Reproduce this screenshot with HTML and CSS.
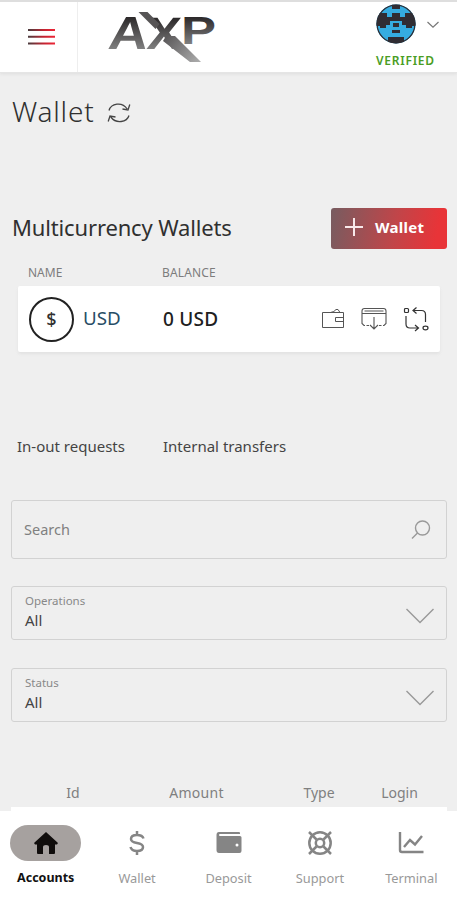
FILE: index.html
```html
<!DOCTYPE html>
<html lang="en">
<head>
<meta charset="utf-8">
<title>Wallet</title>
<link rel="stylesheet" href="styles.css">
</head>
<body>
<header class="header">
  <div class="menu">
    <svg width="28" height="20" viewBox="0 0 28 20"><defs><linearGradient id="bar" gradientUnits="userSpaceOnUse" x1="0" x2="27" y1="0" y2="0"><stop stop-color="#493b3d"/><stop offset=".6" stop-color="#c52432"/><stop offset="1" stop-color="#ee2536"/></linearGradient></defs><path d="M0 3H27M0 9.8H27M0 16.6H27" stroke="url(#bar)" stroke-width="2"/></svg>
  </div>
  <svg class="logo" width="112" height="56" viewBox="106 8 112 56" role="img" aria-label="AXP">
    <defs>
      <linearGradient id="steel" gradientUnits="userSpaceOnUse" x1="0" x2="0" y1="-17" y2="1"><stop stop-color="#2c292a"/><stop offset="1" stop-color="#858585"/></linearGradient>
      <linearGradient id="tail" gradientUnits="userSpaceOnUse" x1="165" x2="198" y1="34" y2="62"><stop stop-color="#565455"/><stop offset="1" stop-color="#aaa"/></linearGradient>
    </defs>
    <g class="logo-text" fill="url(#steel)">
      <text transform="translate(107 49) skewX(-7) scale(2.2 1.86)">A</text>
      <text transform="translate(146 49) skewX(-4) scale(2.05 1.82)">X</text>
      <text transform="translate(181 44) scale(2.1 1.57)">P</text>
    </g>
    <path d="M138.500 12h9l12 12-4 5zM166 36h9l26 26h-11l-27-21z" fill="url(#tail)"/>
  </svg>
  <div class="account">
    <div class="account-row">
      <svg width="40" height="40" viewBox="0 0 40 40"><defs><clipPath id="round"><circle cx="20" cy="20" r="19.6"/></clipPath></defs><g clip-path="url(#round)"><path fill="#35ace0" d="M0 0h40v40H0z"/><path fill="#302d33" d="M16 0h8v5h-8zM0 9h11v4h5v-4h8v4h5v-4h11v13h-4v2h-6v-3h-4v-4H14v4h-4v3H4v-2H0zM17 19h6v4h-6zM16 26h8v3h-8zM12 33h16v7H12z"/><circle cx="20" cy="20" r="19" fill="none" stroke="#302d33" stroke-width="1.500"/></g></svg>
      <svg width="14" height="10" viewBox="0 0 14 10"><path d="M1.5 3L7 8.2 12.5 3" fill="none" stroke="#777" stroke-width="1.2"/></svg>
    </div>
    <div class="verified">VERIFIED</div>
  </div>
</header>
<main class="page">
  <div class="title"><h1>Wallet</h1>
    <svg width="24" height="24" viewBox="0 0 24 24" fill="none" stroke="#444" stroke-width="1.3"><path d="M2 10.500C4 3.500 15 1.200 20.200 9M22.800 4.500L21 10l-5.500-1M22 15.500C20 22.500 9 24 3.800 17M1.200 21.500L3 16l5.500 1"/></svg>
  </div>
  <div class="section-head"><h2>Multicurrency Wallets</h2>
    <button class="add"><svg width="18" height="18" viewBox="0 0 18 18"><path d="M9 0V18M0 9H18" stroke="#f8e9ea" stroke-width="2"/></svg><span>Wallet</span></button>
  </div>
  <div class="columns"><span class="name">NAME</span><span class="balance-label">BALANCE</span></div>
  <div class="card">
    <span class="coin">$</span><span class="currency">USD</span><span class="balance">0 USD</span>
    <div class="actions">
      <svg width="24" height="22" viewBox="0 0 24 22" fill="none" stroke="#555"><path d="M1.500 4.500h21v15h-21zM9.500 4.500q4-.5 5.500-3h2l2 3M22.500 9.500h-8v4h8"/></svg>
      <svg width="26" height="24" viewBox="0 0 26 24" fill="none" stroke="#555" stroke-width="1.1"><path d="M4 18.500H3L1 16.500V4q0-2.500 2.500-2.500h19Q25 1.500 25 4v12.500l-2 2h-1M1 6.500h24M3.500 4h19M13 10v12M9 18l4 4 4-4M5.500 18.500H8M18 18.500h2.500"/></svg>
      <svg width="26" height="26" viewBox="0 0 26 26" fill="none" stroke="#333" stroke-width="1.2"><rect x="1.500" y="2.500" width="4" height="4" rx="1"/><ellipse cx="22.500" cy="22" rx="2.500" ry="1.800"/><path d="M3 10v8q0 4 4 4H15M12 19l3.500 3-3.500 3M22.500 16V8.500q0-4-4-4H10M13.500 1.500l-3.500 3 3.500 3"/></svg>
    </div>
  </div>
  <nav class="tabs"><span class="tab-requests">In-out requests</span><span class="tab-transfers">Internal transfers</span></nav>
  <div class="search"><span>Search</span><svg width="20" height="20" viewBox="0 0 20 20" fill="none" stroke="#999" stroke-width="1.4"><circle cx="11.500" cy="8" r="7"/><path d="M6.500 13L1 18.500"/></svg></div>
  <div class="select"><div><div class="label operations">Operations</div><div class="value">All</div></div><svg width="30" height="18" viewBox="0 0 30 18"><path d="M1.500 2L15 15.500 28.500 2" fill="none" stroke="#999" stroke-width="1.400"/></svg></div>
  <div class="select"><div><div class="label">Status</div><div class="value">All</div></div><svg width="30" height="18" viewBox="0 0 30 18"><path d="M1.500 2L15 15.500 28.500 2" fill="none" stroke="#999" stroke-width="1.400"/></svg></div>
  <div class="table-head"><span>Id</span><span class="amount">Amount</span><span>Type</span><span>Login</span></div>
  <div class="table-body"></div>
</main>
<nav class="bottom">
  <div class="item active"><div class="icon"><svg width="26" height="24" viewBox="0 0 26 24"><path fill="#100d0c" d="M13 1L25 12l-1 1.500h-2V22q0 1-1 1h-5v-7q0-2-3-2t-3 2v7H5q-1 0-1-1v-8.500H2L1 12z"/></svg></div><span>Accounts</span></div>
  <div class="item"><div class="icon"><svg width="16" height="26" viewBox="0 0 16 26" fill="none" stroke="#858585" stroke-width="2.500"><path d="M8 1v4M8 21v4M14.500 8.500Q13.500 5 8 5 2 5 2 9q0 3 6 4t6 4q0 4-6 4-5.500 0-6.500-4"/></svg></div><span>Wallet</span></div>
  <div class="item"><div class="icon"><svg width="26" height="24" viewBox="0 0 26 24"><path fill="#858585" d="M3 1h20q1 0 1 1v1H4q-1 0-1 1t1 1h20q1.500 0 1.500 1.500V20q0 2-2 2H3q-2.500 0-2.500-3V4Q.5 1 3 1z"/><circle cx="21" cy="14" r="1.500" fill="#fff"/></svg></div><span>Deposit</span></div>
  <div class="item"><div class="icon"><svg width="26" height="26" viewBox="0 0 26 26" fill="none" stroke="#858585" stroke-width="2.500"><circle cx="13" cy="13" r="10.700"/><circle cx="13" cy="13" r="4.200"/><path d="M2 2l7.500 7.500M24 2l-7.500 7.500M2 24l7.500-7.500M24 24l-7.500-7.500"/></svg></div><span>Support</span></div>
  <div class="item"><div class="icon"><svg width="26" height="24" viewBox="0 0 26 24" fill="none" stroke="#858585" stroke-width="2.400"><path d="M2 1v18q0 2 2 2h21.500M6 16l6-7 5 4.500L24 5"/></svg></div><span>Terminal</span></div>
</nav>
</body>
</html>
```
FILE: styles.css
```css
* { box-sizing: border-box; }
body { margin: 0; height: 900px; overflow: hidden; display: flex; flex-direction: column; background: #efefef; color: #303030; font-family: "Noto Sans", "Open Sans", sans-serif; }
svg { display: block; flex: none; }
h1, h2 { margin: 0; white-space: nowrap; }
span { white-space: nowrap; }
.header { flex: none; height: 73px; border-top: 2px solid #dedede; border-bottom: 1px solid #e5e5e5; background: #fff; display: flex; box-shadow: 0 1px 3px #ddd; }
.menu { width: 78px; border-right: 1px solid #eee; padding: 25px 0 0 28px; }
.logo { margin: 6px 0 0 28px; }
.logo-text { font: bold 25px "Liberation Sans", sans-serif; }
.account { margin-left: auto; width: 81px; padding-top: 2px; }
.account-row { display: flex; align-items: center; gap: 10px; }
.verified { color: #4a9d24; font-size: 12px; font-weight: 600; line-height: 16px; letter-spacing: .75px; padding-top: 9px; }
.page { height: 738px; overflow: hidden; padding: 0 10px 0 11px; }
.title { display: flex; align-items: center; gap: 13px; height: 78px; }
h1 { font: 300 28px/38px "Noto Sans", "Open Sans", sans-serif; letter-spacing: .8px; padding: 0 0 2px 1px; }
.section-head { margin-top: 56px; height: 42px; display: flex; align-items: center; justify-content: space-between; }
h2 { font-size: 22px; font-weight: 400; line-height: 30px; letter-spacing: -.15px; padding: 0 0 2px 1px; }
.add { width: 116px; height: 41px; border: 0; border-radius: 3px; color: #fff; background: linear-gradient(100deg, #775c60, #c14549 55%, #e83438 90%); display: flex; align-items: center; gap: 12px; padding: 0 0 2px 14px; font: 700 15px "Noto Sans", sans-serif; letter-spacing: .3px; }
.columns { display: flex; height: 37px; padding: 15px 0 0 17px; color: #7d7d7d; font-size: 12px; line-height: 18px; }
.name { width: 134px; }
.balance-label { letter-spacing: .15px; }
.card { margin: 0 7px; height: 66px; background: #fff; border-radius: 2px; box-shadow: 0 2px 3px #e2e2e2; display: flex; align-items: center; padding-left: 11px; }
.coin { width: 45px; height: 45px; border: 2px solid #222; border-radius: 50%; font-size: 18px; font-weight: 500; line-height: 40px; text-align: center; }
.currency { width: 80px; margin-left: 9px; padding-bottom: 2px; font-size: 18.800px; color: #284e66; }
.balance { color: #202020; font-size: 19px; font-weight: 500; letter-spacing: .25px; padding-bottom: 1px; }
.actions { display: flex; align-items: center; gap: 16px; margin-left: auto; padding-right: 11px; }
.tabs { height: 24px; margin-top: 82px; padding-left: 6px; display: flex; font-size: 15px; line-height: 25px; color: #444; }
.tab-requests { width: 146px; }
.search { height: 59px; margin-top: 42px; border: 1px solid #d2d2d2; border-radius: 3px; padding: 0 15px 0 12px; display: flex; align-items: center; justify-content: space-between; color: #808080; font-size: 14.500px; }
.search span { padding-bottom: 2px; }
.select { height: 54px; margin-top: 27px; border: 1px solid #d2d2d2; border-radius: 3px; padding: 5px 11px 0 13px; display: flex; justify-content: space-between; }
.select + .select { margin-top: 28px; }
.select svg { margin-top: 15px; }
.label { color: #888; font-size: 11.5px; line-height: 17px; }
.value { color: #444; font-size: 15px; line-height: 22px; }
.table-head { height: 24px; margin-top: 59px; display: grid; grid-template-columns: 124px 123px 122px 39px; justify-items: center; font-size: 14px; line-height: 24px; color: #808080; }
.amount { letter-spacing: .3px; }
.table-body { margin-top: 2px; height: 10px; background: #fff; }
.bottom { height: 89px; background: #fff; display: flex; }
.item { flex: 1; display: flex; flex-direction: column; align-items: center; padding-top: 14px; font-size: 12.800px; line-height: 18px; color: #999; }
.icon { width: 71px; height: 36px; border-radius: 18px; margin-bottom: 8px; display: grid; place-items: center; }
.active { color: #111; font-weight: 700; font-size: 12.500px; }
.active .icon { background: #a6a19f; }
```
